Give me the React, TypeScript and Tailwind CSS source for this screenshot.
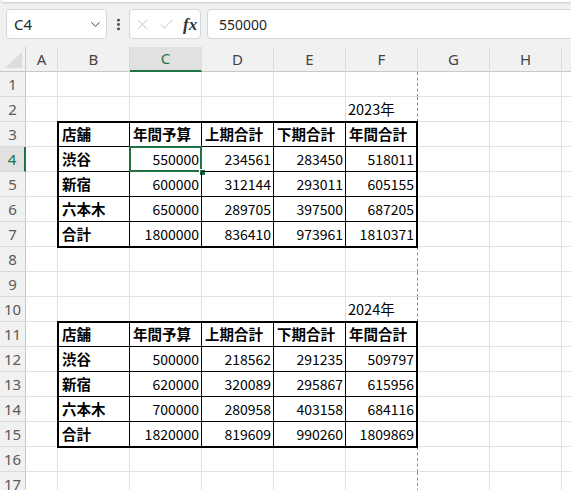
import React from 'react';
import { ChevronDown, EllipsisVertical, X, Check } from 'lucide-react';

const COLS = ['A', 'B', 'C', 'D', 'E', 'F', 'G', 'H', 'I'];
const HEAD = ['店舗', '年間予算', '上期合計', '下期合計', '年間合計'];

const TABLE_2023: (string | number)[][] = [
  ['渋谷', 550000, 234561, 283450, 518011],
  ['新宿', 600000, 312144, 293011, 605155],
  ['六本木', 650000, 289705, 397500, 687205],
  ['合計', 1800000, 836410, 973961, 1810371],
];

const TABLE_2024: (string | number)[][] = [
  ['渋谷', 500000, 218562, 291235, 509797],
  ['新宿', 620000, 320089, 295867, 615956],
  ['六本木', 700000, 280958, 403158, 684116],
  ['合計', 1820000, 819609, 990260, 1809869],
];

const cellFont = { fontFamily: '"Noto Sans CJK JP", "Noto Sans", sans-serif' };
const uiFont = { fontFamily: '"Noto Sans", "Liberation Sans", sans-serif' };

const inTable = (row: number, col: number) =>
  ((row >= 3 && row <= 7) || (row >= 11 && row <= 15)) && col >= 1 && col <= 5;

interface DataTableProps {
  readonly rows: (string | number)[][];
  readonly placement: string;
  readonly selected?: boolean;
}

const DataTable: React.FC<DataTableProps> = ({ rows, placement, selected = false }) => {
  const all: (string | number)[][] = [HEAD, ...rows];
  return (
    <div
      className={`${placement} col-start-3 col-span-5 -ml-px -mt-px -mb-px border-2 border-black bg-white grid grid-cols-[71px_72px_72px_72px_1fr] grid-rows-[24px_25px_25px_25px_1fr] text-black`}
      style={cellFont}
    >
      {all.map((r, ri) =>
        r.map((v, ci) => {
          const lastRow = ri === all.length - 1;
          const lastCol = ci === r.length - 1;
          const bold = ri === 0 || ci === 0;
          const isNum = typeof v === 'number';
          const isSel = selected && ri === 1 && ci === 1;
          return (
            <div
              key={`${ri}-${ci}`}
              className={`relative flex items-center leading-none whitespace-nowrap border-black ${
                lastRow ? '' : 'border-b'
              } ${lastCol ? '' : 'border-r'} ${bold ? 'font-bold' : ''} ${
                isNum ? 'justify-end pr-[2px] text-[14px]' : 'pl-[3px] text-[14.5px]'
              }`}
            >
              {v}
              {isSel && (
                <>
                  <span className="absolute inset-[-1px] border-2 border-[#217346]" />
                  <span className="absolute right-[-5px] bottom-[-5px] w-[7px] h-[7px] bg-[#217346] border border-white" />
                </>
              )}
            </div>
          );
        }),
      )}
    </div>
  );
};

const FormulaBar: React.FC = () => {
  return (
    <div className="relative h-[47px] bg-[#f1f1f1] overflow-hidden" style={uiFont}>
      <div className="h-[2px] ml-[2px] bg-white rounded-bl-[4px] shadow-[0_1px_2px_rgba(0,0,0,0.18)]" />
      <div className="flex items-center mt-[7px] h-[30px]">
        <div className="shrink-0 ml-[6px] w-[101px] h-[30px] flex items-center justify-between rounded-[4px] border border-[#d6d6d6] bg-white pl-[7px] pr-[3px] text-[15px] text-[#262626]">
          <span>C4</span>
          <ChevronDown size={15} strokeWidth={1.6} className="text-[#444]" />
        </div>
        <div className="shrink-0 w-[22px] flex justify-center text-[#444]">
          <EllipsisVertical size={15} strokeWidth={2.6} />
        </div>
        <div className="shrink-0 w-[72px] h-[30px] flex items-center rounded-[4px] border border-[#d6d6d6] bg-white pl-[4px]">
          <X size={17} strokeWidth={1.2} className="text-[#b8b8b8]" />
          <Check size={17} strokeWidth={1.2} className="ml-[7px] text-[#b8b8b8]" />
          <span
            className="ml-[8px] italic font-bold text-[17px] text-[#333] leading-none"
            style={{ fontFamily: '"Liberation Serif", "DejaVu Serif", serif' }}
          >
            fx
          </span>
        </div>
        <div className="shrink-0 ml-[6px] w-[420px] h-[30px] flex items-center rounded-l-[4px] border border-r-0 border-[#d6d6d6] bg-white pl-[11px] text-[14px] text-[#262626]">
          550000
        </div>
      </div>
    </div>
  );
};

const Sheet: React.FC = () => {
  const cells: React.ReactNode[] = [];

  // header row
  cells.push(
    <div
      key="corner"
      className="relative bg-[#f1f1f1] border-r border-b border-[#c8c8c8] overflow-hidden"
    >
      <div className="absolute right-[3px] bottom-[3px] w-0 h-0 border-l-[17px] border-l-transparent border-b-[16px] border-b-[#dcdcdc]" />
    </div>,
  );
  COLS.forEach((c) => {
    const sel = c === 'C';
    cells.push(
      <div
        key={`h-${c}`}
        className={`flex items-center justify-center text-[15px] border-r border-r-[#dadada] ${
          sel
            ? 'bg-[#e1e1e1] text-[#217346] border-b-2 border-b-[#217346]'
            : 'bg-[#f1f1f1] text-[#444] border-b border-b-[#c8c8c8]'
        }`}
        style={uiFont}
      >
        {c}
      </div>,
    );
  });

  for (let r = 1; r <= 17; r++) {
    const selRow = r === 4;
    cells.push(
      <div
        key={`r-${r}`}
        className={`flex items-center justify-center text-[15px] border-b border-b-[#dadada] ${
          selRow
            ? 'bg-[#e1e1e1] text-[#217346] border-r-2 border-r-[#217346]'
            : 'bg-[#f1f1f1] text-[#5a5a5a] border-r border-r-[#c8c8c8]'
        }`}
        style={uiFont}
      >
        {r}
      </div>,
    );
    COLS.forEach((c, ci) => {
      if (inTable(r, ci)) return;
      const pageBreak = c === 'F';
      let text = '';
      if (c === 'F' && r === 2) text = '2023年';
      if (c === 'F' && r === 10) text = '2024年';
      cells.push(
        <div
          key={`${c}${r}`}
          className={`flex items-center pl-[2px] bg-white text-[14.5px] text-black whitespace-nowrap border-r border-b border-b-[#e1e1e1] ${
            pageBreak ? 'border-r-[#8e8e8e] [border-right-style:dashed]' : 'border-r-[#e1e1e1]'
          }`}
          style={cellFont}
        >
          {text}
        </div>,
      );
    });
  }

  return (
    <div className="grid grid-cols-[26px_32px_72px_72px_72px_72px_72px_72px_72px_72px] auto-rows-[25px]">
      {cells}
      <DataTable rows={TABLE_2023} placement="row-start-4 row-span-5" selected />
      <DataTable rows={TABLE_2024} placement="row-start-12 row-span-5" />
    </div>
  );
};

export default function App() {
  return (
    <div className="w-[571px] h-[490px] overflow-hidden bg-white">
      <FormulaBar />
      <Sheet />
    </div>
  );
}
